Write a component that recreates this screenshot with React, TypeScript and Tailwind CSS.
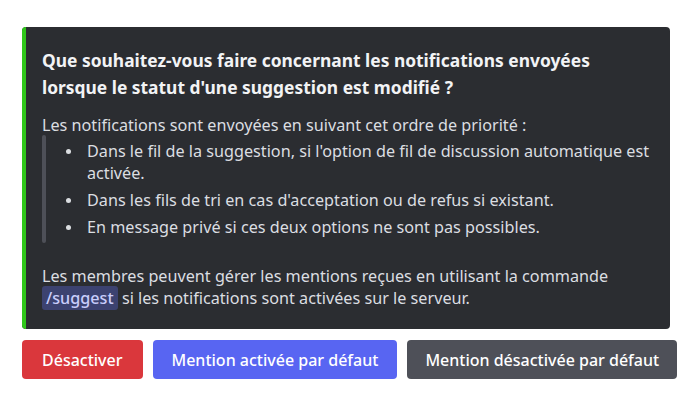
import React from 'react';

const font = { fontFamily: '"Noto Sans", "Open Sans", sans-serif' };

const items = [
  "Dans le fil de la suggestion, si l'option de fil de discussion automatique est activée.",
  "Dans les fils de tri en cas d'acceptation ou de refus si existant.",
  'En message privé si ces deux options ne sont pas possibles.',
];

export default function App() {
  return (
    <div className="min-h-screen bg-white pl-[22px] pt-[27px]" style={font}>
      {/* Embed */}
      <div className="flex w-[648px] rounded-[4px] bg-[#2b2d31] overflow-hidden">
        <div className="w-[4px] shrink-0 bg-[#2fc81a]" />
        <div className="flex-1 pl-[16px] pr-[16px] pt-[20px] pb-[20px]">
          <div className="text-[17.4px] leading-[27px] font-bold text-[#f2f3f5]">
            Que souhaitez-vous faire concernant les notifications envoyées lorsque le statut d'une suggestion est modifié ?
          </div>
          <div className="mt-[13px] text-[16.2px] leading-[22px] text-[#dbdee1]">
            <div>Les notifications sont envoyées en suivant cet ordre de priorité :</div>
            <div className="flex mt-[-1px]">
              <div className="w-[4px] shrink-0 rounded-[4px] bg-[#4e5058]" />
              <ul className="flex flex-col gap-[5px] py-[5px] pl-[18px]">
                {items.map((t) => (
                  <li key={t} className="flex">
                    <span className="w-[23px] shrink-0 flex items-start pt-[9px] pl-[2px]">
                      <span className="block w-[5px] h-[5px] rounded-full bg-[#dbdee1]" />
                    </span>
                    <span>{t}</span>
                  </li>
                ))}
              </ul>
            </div>
            <div className="mt-[22px]">
              Les membres peuvent gérer les mentions reçues en utilisant la commande{' '}
              <span className="rounded-[3px] bg-[#3c4270] px-[4px] py-[1px] font-medium text-[#c9cdfb]">/suggest</span>{' '}
              si les notifications sont activées sur le serveur.
            </div>
          </div>
        </div>
      </div>

      {/* Buttons */}
      <div className="mt-[11px] flex gap-[10px]">
        <button className="h-[39px] rounded-[4px] bg-[#da373c] px-[20px] text-[16px] font-medium text-white">
          Désactiver
        </button>
        <button className="h-[39px] rounded-[4px] bg-[#5865f2] px-[19px] text-[16px] font-medium text-white">
          Mention activée par défaut
        </button>
        <button className="h-[39px] rounded-[4px] bg-[#4e5058] px-[18px] text-[16px] font-medium text-white">
          Mention désactivée par défaut
        </button>
      </div>
    </div>
  );
}
